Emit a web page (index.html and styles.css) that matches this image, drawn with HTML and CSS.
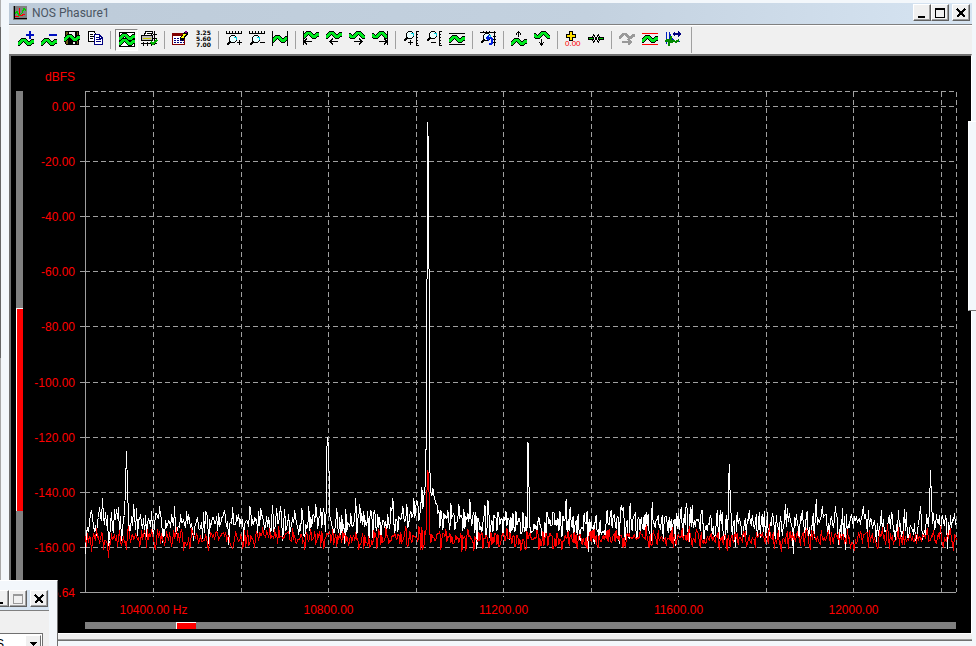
FILE: index.html
```html
<!DOCTYPE html>
<html lang="en">
<head>
<meta charset="utf-8">
<title>NOS Phasure1</title>
<link rel="stylesheet" href="styles.css">
</head>
<body>
<svg class="defs" aria-hidden="true">
  <defs>
    <path id="wave-line" d="M0 8H1V7H2V6H3V5H4V4H7V5H8V6H9V7H10V8H12V7H13V6H14V5H15V6H16"/>
    <path id="dip-line" d="M0 5H1V6H2V7H5V6H6V5H7V4H8V3H11V4H12V5H13V6H14V7H16"/>
    <g id="wave"><use href="#wave-line" class="w-out" y="-1"/><use href="#wave-line" class="w-out" y="1"/><use href="#wave-line" class="w-in"/></g>
    <g id="dip"><use href="#dip-line" class="w-out" y="-1"/><use href="#dip-line" class="w-out" y="1"/><use href="#dip-line" class="w-in"/></g>
    <g id="lens"><path d="M5 8L1 12" class="k2"/><circle cx="7" cy="6" r="3.500" fill="#e8ffff" stroke="#000"/><path d="M8 4h2v3" class="c"/></g>
    <g id="hruler"><path d="M0 3.500H16M.5 1v2M3.500 1v2M6.500 1v2M9.500 1v2M12.500 1v2M15.500 1v2" class="k"/></g>
    <g id="vruler"><path d="M13.500 1V16M13 1.500h3M13 4.500h2M13 7.500h2M13 10.500h2M13 13.500h2M13 15.500h3" class="k"/></g>
    <g id="left"><path d="M1 11.500H9M4 8.500L1 11.500L4 14.500" class="k"/></g>
    <g id="right"><path d="M7 11.500H15M12 8.500L15 11.500L12 14.500" class="k"/></g>
  </defs>
</svg>
<div class="desktop">
  <div class="edge"></div>
  <main class="window">
    <header class="titlebar">
      <svg class="app" viewBox="0 0 14 14"><path fill="#808080" d="M0 0h14v14H0z"/><path d="M1.500 0V13M1 12.500H14" class="k"/><path d="M2 10.500H5V7.500H6.500V2V9.500H9.500V8.500H12" fill="none" stroke="red"/><path d="M2 8L4 5L6 10L9 7L11 2L13 5" fill="none" stroke="#0c0"/></svg>
      <h1>NOS Phasure1</h1>
      <button class="cap" aria-label="Minimize"><svg viewBox="0 0 12 12"><path d="M2 9h7v2H2z"/></svg></button>
      <button class="cap" aria-label="Maximize"><svg viewBox="0 0 12 12"><path d="M1 1h10v10H1zM2 3v7h8V3z" fill-rule="evenodd"/></svg></button>
      <button class="cap close" aria-label="Close"><svg viewBox="0 0 12 12"><path d="M2 2L10 10M10 2L2 10" class="k2"/></svg></button>
    </header>
    <div class="toolbar" role="toolbar" aria-label="Graph tools">
      <button aria-label="Add curve"><svg viewBox="0 0 16 17"><use href="#wave" y="6"/><path d="M8 4h8v2H8zM11 1h2v8h-2z" fill="#0010c0"/></svg></button>
      <button aria-label="Remove curve"><svg viewBox="0 0 16 17"><use href="#wave" y="6"/><path d="M8 4h8v2H8z" fill="#0010c0"/></svg></button>
      <button aria-label="Save"><svg viewBox="0 0 16 17"><path d="M1 1h14v14H2L1 14z"/><path d="M2 2h2v12H2zM13 2h1v12h-1z" fill="#6b5a18"/><path d="M5 2h6v5H5zM9 11h2v3H9z" fill="#eee"/><use href="#wave" y="2"/></svg></button>
      <button aria-label="Copy"><svg viewBox="0 0 16 17"><path d="M1.500 1.500H7L9.500 4.500V11.500H1.500z" fill="#fff" stroke="#000"/><path d="M3 4.500h3M3 6.500h4M3 8.500h3" class="k"/><path d="M7.500 4.500H12L15.500 8V14.500H7.500z" fill="#fff" stroke="#000080"/><path d="M9 7.500h3M9 9.500h5M9 11.500h5" stroke="#000080"/><path d="M12.500 5v3h3" fill="none" stroke="#000080"/></svg></button>
      <i class="sep"></i>
      <button class="on" aria-label="Overlay"><svg viewBox="0 0 16 17"><path d="M.5 2.500h15v14H.5z" fill="#fff" stroke="#000"/><use href="#wave" y="1"/><use href="#wave" y="6"/></svg></button>
      <button aria-label="Print"><svg viewBox="0 0 16 17"><path d="M4.500 1.500h7l-1 4h-7z" fill="#fff" stroke="#000"/><path d="M6 3.500h4" class="k"/><path d="M.5 5.500h11v5H.5z" fill="#bbb" stroke="#000"/><path d="M2 8.500h8" stroke="#cc0"/><path d="M13.500 1V15M0 13.500H16M2.500 12v4M6.500 12v4M10.500 12v4M12 4.500h4M12 8.500h4" class="k"/><path d="M10 12l2 2 4-4" fill="none" stroke="#00b000" stroke-width="2"/></svg></button>
      <i class="sep"></i>
      <button aria-label="Settings"><svg viewBox="0 0 16 17"><path d="M.5 3.500h12v11H.5z" fill="#fff" stroke="#800000"/><path d="M0 3h12v3H0z" fill="#800000"/><path d="M2 8.500h10M2 10.500h10M2 12.500h10" stroke="#000080" stroke-dasharray="2 1"/><path d="M15 2L9 10" stroke="#000" stroke-width="4"/><path d="M13 4L10 8" stroke="#ff0" stroke-width="2"/><path d="M13 1h2v2h-2z" fill="#800080"/></svg></button>
      <button aria-label="Values"><svg viewBox="0 0 16 17"><g class="digits"><text x="1" y="5">3.25</text><text x="1" y="11">5.60</text><text x="1" y="17">7.00</text></g></svg></button>
      <i class="sep"></i>
      <button aria-label="Zoom in X"><svg viewBox="0 0 16 17"><use href="#hruler"/><use href="#lens" y="3"/><path d="M11 12.500h5M13.500 10v5" class="k"/></svg></button>
      <button aria-label="Zoom out X"><svg viewBox="0 0 16 17"><use href="#hruler"/><use href="#lens" y="3"/><path d="M11 12.500h5" class="k"/></svg></button>
      <button aria-label="Fit X"><svg viewBox="0 0 16 17"><use href="#wave" y="3"/><path d="M.5 1V16M15.500 1V16" class="k"/></svg></button>
      <i class="sep"></i>
      <button aria-label="First"><svg viewBox="0 0 16 17"><use href="#wave" y="-1"/><use href="#left"/><path d="M.5 1V15" class="k"/></svg></button>
      <button aria-label="Scroll left"><svg viewBox="0 0 16 17"><use href="#wave" y="-1"/><use href="#left" x="3"/></svg></button>
      <button aria-label="Scroll right"><svg viewBox="0 0 16 17"><use href="#dip"/><use href="#right" x="-2"/></svg></button>
      <button aria-label="Last"><svg viewBox="0 0 16 17"><use href="#dip"/><use href="#right"/><path d="M15.500 1V15" class="k"/></svg></button>
      <i class="sep"></i>
      <button aria-label="Zoom in Y"><svg viewBox="0 0 16 17"><use href="#lens" y="-1"/><use href="#vruler"/><path d="M5 12.500h5M7.500 10v5" class="k"/></svg></button>
      <button aria-label="Zoom out Y"><svg viewBox="0 0 16 17"><use href="#lens" y="-1"/><use href="#vruler"/><path d="M5 12.500h5" class="k"/></svg></button>
      <button aria-label="Fit Y"><svg viewBox="0 0 16 17"><use href="#wave" y="3"/><path d="M0 3.500H16M0 14.500H16" class="k"/></svg></button>
      <i class="sep"></i>
      <button aria-label="Undo zoom"><svg viewBox="0 0 16 17"><path d="M0 2.500H16M14.500 1V16M3.500 1v2M6.500 1v2M9.500 1v2M13 6.500h3M13 9.500h3M13 12.500h3" class="k"/><use href="#lens" y="1"/><path d="M7 8h4q3 3 0 6H9" fill="none" stroke="#0020e0" stroke-width="2"/><path d="M5 8l4-4v7z" fill="#0020e0"/></svg></button>
      <i class="sep"></i>
      <button aria-label="Shift up"><svg viewBox="0 0 16 17"><use href="#wave" y="6"/><path d="M7.500 1V7M5 4.500L7.500 1.500L10 4.500" class="k"/></svg></button>
      <button aria-label="Shift down"><svg viewBox="0 0 16 17"><use href="#dip"/><path d="M7.500 9V15M5 12L7.500 15L10 12" class="k"/></svg></button>
      <i class="sep"></i>
      <button aria-label="Cursor"><svg viewBox="0 0 16 17"><path d="M4 1h4v3h3v4H8v3H4V8H1V4h3z"/><path d="M5 2h2v3h3v2H7v3H5V7H2V5h3z" fill="#ffe000"/><text x="0" y="16" class="zero">0.00</text></svg></button>
      <button aria-label="Peak"><svg viewBox="0 0 16 17"><path d="M0 7h4V5l3 3.500L4 12v-2H0zM16 7h-4V5L9 8.500l3 3.500v-2h4z"/><path d="M1 8h4v1H1zM11 8h4v1h-4z" fill="#0c0"/><path d="M5.500 4l5 9M10.500 4l-5 9" stroke="#f0f0f0" stroke-width="3"/><path d="M5 4l6 9M11 4l-6 9" class="k"/></svg></button>
      <i class="sep"></i>
      <button aria-label="Redo" disabled><svg viewBox="0 0 16 17"><use href="#wave-line" fill="none" stroke="#999" stroke-width="2"/><path d="M3 12h9M9 9l3 3-3 3" fill="none" stroke="#999" stroke-width="2"/></svg></button>
      <button aria-label="Limits"><svg viewBox="0 0 16 17"><use href="#wave" y="3"/><path d="M0 3.500H16M0 14.500H16" stroke="red"/></svg></button>
      <button aria-label="Spectrum"><svg viewBox="0 0 16 17"><path d="M1.500 2V14M4.500 2V12M4 2.500Q7 8 9 11H15" fill="none" stroke="#0020c0"/><path d="M0 11L3 10L4 14L6 8L7 12L9 11L11 12L14 10" fill="none" stroke="#080" stroke-width="2"/><path d="M7 4l3-3v2h3V1l3 3-3 3V5h-3v2z" fill="#000080"/></svg></button>
      <i class="end"></i>
    </div>
    <section class="plot">
      <input class="vbar" type="range" min="0" max="298" value="217" aria-label="Amplitude range">
      <div class="chart"><svg id="chart" role="img" aria-label="Spectrum in dBFS"></svg></div>
      <input class="hbar" type="range" min="0" max="851" value="91" aria-label="Frequency range">
    </section>
    <div class="foot"></div>
  </main>
</div>
<div class="behind"></div>
<aside class="popup">
  <div class="popup-title">
    <button class="cap" aria-label="Minimize popup"><svg viewBox="0 0 12 12"><path d="M2 9h7v2H2z"/></svg></button>
    <button class="cap" aria-label="Maximize popup" disabled><svg viewBox="0 0 12 12"><path fill="#999" d="M1 1h10v10H1zM2 3v7h8V3z" fill-rule="evenodd"/></svg></button>
    <button class="cap close" aria-label="Close popup"><svg viewBox="0 0 12 12"><path d="M2 2L10 10M10 2L2 10" class="k2"/></svg></button>
  </div>
  <div class="popup-body">
    <div class="combo"><select aria-label="Unit"><option>S</option></select><svg viewBox="0 0 14 14"><path d="M3 5h8L7 9z"/></svg></div>
  </div>
</aside>
<script src="chart.js"></script>
</body>
</html>
```
FILE: styles.css
```css
* { box-sizing: border-box; }
body {
  margin: 0;
  height: 100vh;
  overflow: hidden;
  position: relative;
  background: #f3f7fb;
  font: 12px "Liberation Sans", Arial, sans-serif;
}
.defs { position: absolute; width: 0; height: 0; }
.desktop { display: flex; height: 100%; padding-right: 4px; }
.edge {
  width: 9px;
  flex: none;
  background: linear-gradient(#b0b0b0 27px, #666 27px 358px, #a8a8a8 358px) left / 1px 100% no-repeat;
}
.window { flex: 1; min-width: 0; display: flex; flex-direction: column; padding-top: 3px; }

.titlebar {
  flex: none;
  display: flex;
  align-items: center;
  height: 21px;
  padding: 0 2px 2px 4px;
  background: linear-gradient(90deg, #bdcbd9, #c3d1df 60%, #d6e4f2);
}
.app { width: 14px; height: 14px; margin-right: 5px; }
h1 { flex: 1; margin: 0; font: 12px Roboto, sans-serif; color: #4a5562; }
button { padding: 0; border: 0; background: none; color: #000; }
.cap {
  width: 18px;
  height: 17px;
  flex: none;
  display: grid;
  place-items: center;
  background: #f0f0f0;
  border: 1px solid;
  border-color: #fff #606060 #606060 #fff;
  box-shadow: inset -1px -1px #a0a0a0;
}
.cap svg { width: 12px; height: 12px; }
.close { margin-left: 3px; }

svg { display: block; shape-rendering: crispEdges; }
.k { fill: none; stroke: #000; }
.k2 { fill: none; stroke: #000; stroke-width: 2; }
.c { fill: none; stroke: #00d0e0; }
.w-out { fill: none; stroke: #000; stroke-width: 2; }
.w-in { fill: none; stroke: #00e820; stroke-width: 2; }
.digits { font: bold 6px "DejaVu Sans", sans-serif; }
.zero { font: 8px "Liberation Sans", sans-serif; fill: red; }

.toolbar {
  flex: none;
  display: flex;
  height: 30px;
  padding: 4px 0 2px 6px;
  background: #f0f0f0;
  border-top: 1px solid #808080;
  box-shadow: inset 0 1px #fff;
}
.toolbar button { display: flex; align-items: flex-start; width: 23px; height: 22px; flex: none; padding: 1px 3px 0 3px; }
.toolbar button svg { width: 16px; height: 17px; overflow: visible; }
.toolbar .on { border: 1px solid; border-color: #888 #fff #fff #888; padding: 0 3px; background: #f8f8f8; }
.sep { width: 8px; flex: none; height: 18px; margin-top: 2px; background: linear-gradient(#a0a0a0, #a0a0a0) 3px 0 / 1px 100% no-repeat; }
.end { width: 7px; margin: -2px 0 -1px; border-right: 1px solid #a0a0a0; }

.plot {
  flex: 1;
  min-height: 0;
  display: grid;
  grid-template: minmax(0, 1fr) 7px / 7px minmax(0, 1fr);
  padding: 0 0 4px 5px;
  background: #000;
  border: 2px solid #707070;
  border-right: 1px solid #fff;
  border-bottom: 1px solid #fff;
}
.chart { min-width: 0; min-height: 0; }
#chart { width: 100%; height: 100%; }
#chart text { fill: red; font: 12px "Liberation Sans", Arial, sans-serif; }
.axis, .grid { fill: none; stroke: #a0a0a0; }
.grid { stroke-dasharray: 5 3; }
.signal { fill: none; stroke: #fff; }
.floor { fill: none; stroke: red; }
input[type="range"] { appearance: none; margin: 0; background: #808080; outline: 0; }
.vbar { writing-mode: vertical-lr; width: 7px; height: auto; margin: 35px 0 30px !important; }
.hbar { grid-column: 2; width: auto; height: 7px; margin: 0 15px 0 62px !important; }
input::-webkit-slider-thumb { appearance: none; background: red; border: 0 solid #fff; border-width: 1px 0 0 1px; border-radius: 0; }
.vbar::-webkit-slider-thumb { width: 7px; height: 203px; }
.hbar::-webkit-slider-thumb { width: 20px; height: 7px; }
.foot {
  flex: none;
  height: 12px;
  background: linear-gradient(#f0f0f0 5px, #a0a0a0 5px 6px, #707070 6px 7px, #f3f7fb 7px);
}

.behind {
  position: absolute;
  right: 0;
  top: 121px;
  width: 8px;
  height: 190px;
  background: #f3f7fb;
  border: 1px solid #fff;
  border-right: 0;
  border-bottom-color: #777;
}
.popup {
  position: absolute;
  left: 0;
  bottom: 0;
  width: 58px;
  height: 66px;
  padding: 9px 8px 0 0;
  overflow: hidden;
  background: #f3f7fb;
  border-top: 1px solid #fff;
  border-right: 1px solid #707070;
}
.popup-title { display: flex; justify-content: flex-end; height: 20px; padding: 0 1px 0 0; background: #d6e4f2; }
.popup-body { height: 37px; padding: 22px 6px 0 0; background: #f0f0f0; border-top: 1px solid #808080; }
.combo { display: flex; align-items: center; height: 22px; background: #fff; border: 1px solid #707070; border-left: 0; }
.combo select { appearance: none; flex: 1; min-width: 0; padding: 0; margin-left: -4px; border: 0; background: #fff; font: 12px "Liberation Sans", sans-serif; }
.combo svg { width: 16px; height: 18px; margin-right: 1px; background: #f0f0f0; border: 1px solid; border-color: #fff #707070 #707070 #fff; }
```
FILE: chart.js
```js
const svg = document.getElementById('chart');
const F0 = 10244.3, F1 = 12235.2, TOP_DB = 5, BOTTOM_DB = -176.3;
const BOTTOM_LABEL = '-176.64';
const PAD = { left: 62, top: 36, right: 15, bottom: 30 };
const SAMPLES = 871;

let seed = 4711;
function rand() {
  seed = (seed * 1664525 + 1013904223) >>> 0;
  return seed / 4294967296;
}
function gauss() {
  return rand() + rand() + rand() + rand() + rand() + rand() - 3;
}

// One value per column: noise floor with occasional deep dips, plus the listed tones.
function trace(mean, spread, dip, skirt, tones) {
  const data = [];
  for (let i = 0; i < SAMPLES; i++) {
    const d = Math.abs(i - 342);
    const lift = skirt ? 10 * Math.exp(-d / 8) + 3 * Math.exp(-d / 40) : 0;
    data.push(mean + lift + gauss() * spread - dip * Math.pow(rand(), 8));
  }
  for (const [col, ...values] of tones) values.forEach((v, k) => { data[col + k] = v; });
  return data;
}

const signal = trace(-150.5, 4.2, 7, true, [
  [40, -138, -125, -138], [241, -124, -120, -128], [442, -122, -138], [643, -130, -141], [844, -132, -143],
  [338, -141, -139, -132, -70, -6, -50, -132, -140, -141]
]);
const floor = trace(-156.3, 2.4, 4, false, [[341, -140, -132, -138, -155]]);

function draw() {
  const w = svg.clientWidth, h = svg.clientHeight;
  const left = PAD.left, right = w - PAD.right, top = PAD.top, bottom = h - PAD.bottom;
  const x = f => Math.round(left + (f - F0) / (F1 - F0) * (right - left)) + 0.5;
  const y = db => Math.round(top + (TOP_DB - db) / (TOP_DB - BOTTOM_DB) * (bottom - top)) + 0.5;
  const line = (cls, x1, y1, x2, y2) => `<path class="${cls}" d="M${x1} ${y1}L${x2} ${y2}"/>`;
  const label = (tx, ty, anchor, text) => `<text x="${tx}" y="${ty}" text-anchor="${anchor}">${text}</text>`;
  let out = line('grid', left, top - 0.5, right, top - 0.5) + line('grid', right + 0.5, top, right + 0.5, bottom);
  out += label(left - 10, top - 11, 'end', 'dBFS');
  for (let db = 0; db >= -160; db -= 20) {
    out += line('grid', left, y(db), right, y(db)) + line('axis', left - 5, y(db), left, y(db));
    out += label(left - 10, y(db) + 4, 'end', db.toFixed(2));
  }
  out += label(left - 10, bottom + 5, 'end', BOTTOM_LABEL);
  for (let f = 10400; f <= 12200; f += 200) {
    const major = f % 400 === 0;
    out += line('grid', x(f), top, x(f), major ? bottom + 5 : bottom);
    if (major) out += label(x(f), bottom + 22, 'middle', f.toFixed(2) + (f === 10400 ? ' Hz' : ''));
  }
  out += line('axis', left + 0.5, top, left + 0.5, bottom) + line('axis', left - 5, bottom + 0.5, right, bottom + 0.5);
  const points = data => data.map((v, i) =>
    `${(left + 0.5 + i * (right - left) / (SAMPLES - 1)).toFixed(1)},${y(v)}`).join(' ');
  out += `<polyline class="signal" points="${points(signal)}"/><polyline class="floor" points="${points(floor)}"/>`;
  svg.innerHTML = out;
}
draw();
window.addEventListener('resize', draw);
```
